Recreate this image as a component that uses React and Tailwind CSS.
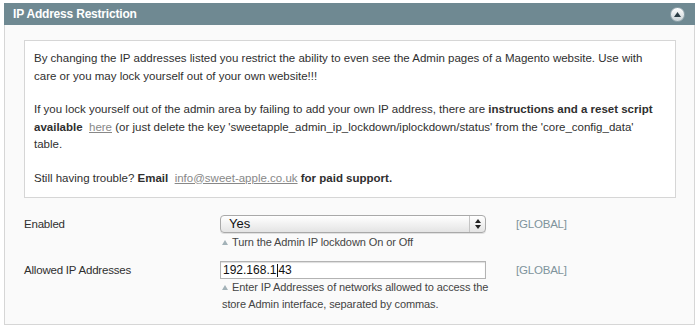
function HintArrow() {
  return (
    <svg width="6" height="5" viewBox="0 0 6 5" className="inline-block align-[1px] mr-[4px]">
      <polygon points="3,0 6,5 0,5" fill="#a3b2b8" />
    </svg>
  );
}

export default function App() {
  return (
    <div className="bg-white min-h-[333px] pl-[4px] pr-[5px] pt-[3px] font-['Liberation_Sans',Arial,sans-serif] text-[#2f2f2f]">
      <div className="h-[22px] bg-[#6f8992] flex items-center justify-between pl-[9px] pr-[10px]">
        <h2 className="text-[12px] tracking-[-0.2px] font-bold text-white">IP Address Restriction</h2>
        <span className="w-[15px] h-[15px] rounded-full bg-gradient-to-b from-[#ffffff] to-[#c9d3d7] border border-[#8fa3ab] flex items-center justify-center">
          <svg width="7" height="5" viewBox="0 0 7 5">
            <polygon points="3.5,0 7,5 0,5" fill="#2b3d45" />
          </svg>
        </span>
      </div>
      <div className="h-[300px] border border-t-0 border-[#d6d6d6] bg-[#fafafa] pt-[15px] pl-[19px]">
        <div className="w-[652px] border border-[#d6d6d6] bg-white pl-[9px] pr-[19px] pt-[9px] pb-[10px] text-[11.5px] leading-[17.5px]">
          <p className="mb-[16px]">
            By changing the IP addresses listed you restrict the ability to even see the Admin pages of a Magento website. Use with care or you may lock yourself out of your own website!!!
          </p>
          <p className="mb-[16px]">
            If you lock yourself out of the admin area by failing to add your own IP address, there are <b>instructions and a reset script available</b>{'\u00a0 '}
            <a href="#" className="text-[#888] underline">here</a> (or just delete the key 'sweetapple_admin_ip_lockdown/iplockdown/status' from the 'core_config_data' table.
          </p>
          <p>
            Still having trouble? <b>Email</b>{'\u00a0 '}
            <a href="#" className="text-[#888] underline">info@sweet-apple.co.uk</a> <b>for paid support.</b>
          </p>
        </div>

        <div className="mt-[17px] grid grid-cols-[196px_266px_30px_auto] text-[11.5px] tracking-[-0.2px]">
          <div className="leading-[18px]">Enabled</div>
          <div>
            <div className="h-[18px] rounded-[4px] border border-[#a9a9a9] bg-gradient-to-b from-[#ffffff] to-[#e4e4e4] flex items-center shadow-[0_1px_0_#e0e0e0]">
              <span className="flex-1 pl-[8px] text-[13px] tracking-normal font-medium text-[#111]">Yes</span>
              <span className="w-[16px] h-full border-l border-[#c4c4c4] flex items-center justify-center">
                <svg width="6" height="10" viewBox="0 0 6 10">
                  <polygon points="3,0 6,4 0,4" fill="#222" />
                  <polygon points="0,6 6,6 3,10" fill="#222" />
                </svg>
              </span>
            </div>
            <p className="mt-[1px] pl-[2px] text-[11px] tracking-[-0.1px] leading-[17px] text-[#444] whitespace-nowrap">
              <HintArrow />
              Turn the Admin IP lockdown On or Off
            </p>
          </div>
          <div />
          <div className="leading-[18px] text-[#7f949c]">[GLOBAL]</div>

          <div className="mt-[10px] leading-[18px]">Allowed IP Addresses</div>
          <div className="mt-[10px]">
            <div className="h-[18px] border border-[#b3b3b3] bg-white flex items-center pl-[2px] text-[12px] tracking-normal text-[#111] shadow-[inset_0_1px_1px_#ddd]">
              192.168.1<span className="inline-block w-[1px] h-[13px] bg-[#111] mx-[0.5px]" />43
            </div>
            <p className="pl-[2px] text-[11px] tracking-[-0.1px] leading-[17px] text-[#444] whitespace-nowrap">
              <HintArrow />
              Enter IP Addresses of networks allowed to access the<br />store Admin interface, separated by commas.
            </p>
          </div>
          <div />
          <div className="mt-[10px] leading-[18px] text-[#7f949c]">[GLOBAL]</div>
        </div>
      </div>
    </div>
  );
}
